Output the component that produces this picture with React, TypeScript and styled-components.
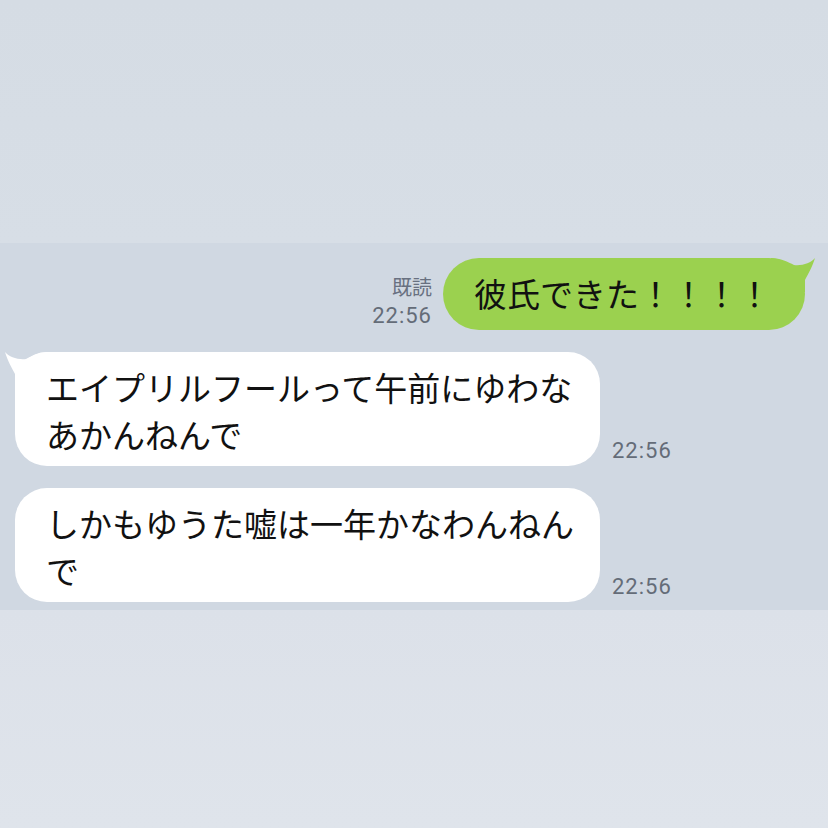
import React from "react";
import styled, { createGlobalStyle } from "styled-components";

const GlobalStyle = createGlobalStyle`
  html, body {
    margin: 0;
    padding: 0;
    background: #dde2e9;
  }
`;

const JP = `"Noto Sans CJK JP", "Noto Sans", sans-serif`;
const NUM = `Roboto, "Liberation Sans", sans-serif`;

const Page = styled.div`
  width: 828px;
  height: 828px;
  display: flex;
  flex-direction: column;
  overflow: hidden;
`;

const TopArea = styled.div`
  height: 243px;
  flex: none;
  background: linear-gradient(#d5dce4, #d7dee6);
`;

const ChatBand = styled.div`
  flex: none;
  background: #d0d8e2;
  padding: 15px 23px 8px 15px;
  display: flex;
  flex-direction: column;
  gap: 22px;
`;

const BottomArea = styled.div`
  flex: 1;
  background: linear-gradient(#dce1e9, #dfe4eb);
`;

const Row = styled.div<{ $out?: boolean }>`
  display: flex;
  align-items: flex-end;
  justify-content: ${(p) => (p.$out ? "flex-end" : "flex-start")};
  gap: ${(p) => (p.$out ? "11px" : "12px")};
`;

const Bubble = styled.div<{ $out?: boolean }>`
  position: relative;
  box-sizing: border-box;
  font-family: ${JP};
  font-size: 33px;
  line-height: 47px;
  color: #111;
  background: ${(p) => (p.$out ? "#9bd14f" : "#ffffff")};
  border-radius: ${(p) => (p.$out ? "36px" : "32px")};
  padding: ${(p) => (p.$out ? "12px 34px 13px 31px" : "12px 24px 8px 31px")};
  max-width: ${(p) => (p.$out ? "none" : "585px")};
  white-space: ${(p) => (p.$out ? "nowrap" : "normal")};
`;

const BubbleText = styled.span`
  position: relative;
`;

const Tail = styled.svg<{ $out?: boolean }>`
  position: absolute;
  top: -2px;
  width: 46px;
  height: 36px;
  ${(p) => (p.$out ? "right: -12px;" : "left: -12px;")}
`;

const Meta = styled.div`
  display: flex;
  flex-direction: column;
  align-items: flex-end;
  margin-bottom: 0px;
`;

const ReadMark = styled.div`
  font-family: ${JP};
  font-size: 20px;
  line-height: 28px;
  color: #687080;
  margin-bottom: 1px;
`;

const Time = styled.div<{ $in?: boolean }>`
  font-family: ${NUM};
  font-size: 22px;
  line-height: 28px;
  letter-spacing: 1px;
  color: #646c78;
  margin-bottom: ${(p) => (p.$in ? "1px" : "0")};
`;

const OutTail = () => (
  <Tail $out viewBox="0 0 46 36">
    <path
      d="M0,2 C10,2 17,6 23,9 C31,10 40,7 44,2 C41,12 37,18 34,24 L34,36 L0,36 Z"
      fill="#9bd14f"
    />
  </Tail>
);

const InTail = () => (
  <Tail viewBox="0 0 46 36">
    <path
      d="M46,2 C36,2 29,6 23,9 C15,10 6,7 2,2 C5,12 9,18 12,24 L12,36 L46,36 Z"
      fill="#ffffff"
    />
  </Tail>
);

type Msg = { out: boolean; text: string; time: string; read?: boolean; tail?: boolean };

const messages: Msg[] = [
  { out: true, text: "彼氏できた！！！！", time: "22:56", read: true, tail: true },
  { out: false, text: "エイプリルフールって午前にゆわなあかんねんで", time: "22:56", tail: true },
  { out: false, text: "しかもゆうた嘘は一年かなわんねんで", time: "22:56", tail: false },
];

export default function App() {
  return (
    <Page>
      <GlobalStyle />
      <TopArea />
      <ChatBand>
        {messages.map((m, i) =>
          m.out ? (
            <Row $out key={i}>
              <Meta>
                {m.read && <ReadMark>既読</ReadMark>}
                <Time>{m.time}</Time>
              </Meta>
              <Bubble $out>
                {m.tail && <OutTail />}
                <BubbleText>{m.text}</BubbleText>
              </Bubble>
            </Row>
          ) : (
            <Row key={i}>
              <Bubble>
                {m.tail && <InTail />}
                <BubbleText>{m.text}</BubbleText>
              </Bubble>
              <Time $in>{m.time}</Time>
            </Row>
          )
        )}
      </ChatBand>
      <BottomArea />
    </Page>
  );
}
